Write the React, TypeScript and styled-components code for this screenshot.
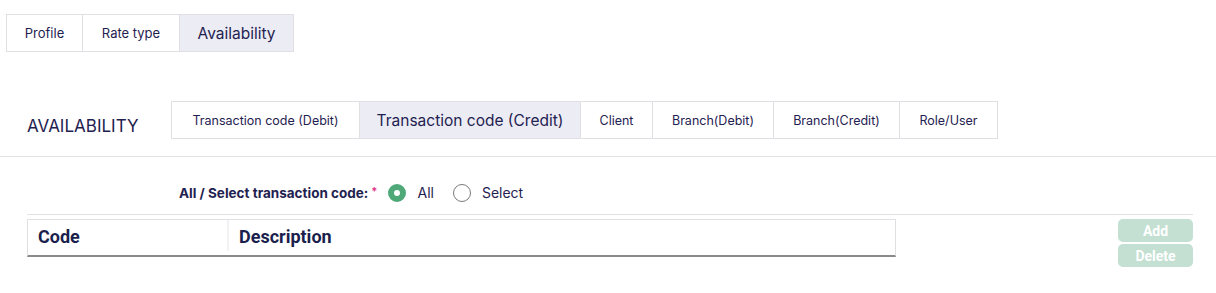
import React, { useState } from 'react'
import styled, { createGlobalStyle } from 'styled-components'

const GlobalStyle = createGlobalStyle`
  body {
    margin: 0;
    background: #fff;
    font-family: Inter, 'Noto Sans', sans-serif;
    color: #1f2250;
  }
`

const mainTabs = [
  { label: 'Profile', width: 77 },
  { label: 'Rate type', width: 98 },
  { label: 'Availability', width: 115 }
]
const subTabs = [
  { label: 'Transaction code (Debit)', width: 189 },
  { label: 'Transaction code (Credit)', width: 222 },
  { label: 'Client', width: 73 },
  { label: 'Branch(Debit)', width: 122 },
  { label: 'Branch(Credit)', width: 127 },
  { label: 'Role/User', width: 99 }
]

const App = () => {
  const [tab, setTab] = useState(2)
  const [sub, setSub] = useState(1)
  const [mode, setMode] = useState<'all' | 'select'>('all')

  return (
    <Page>
      <GlobalStyle />
      <TopTabs>
        {mainTabs.map((t, i) => (
          <TopTab
            key={t.label}
            $active={i === tab}
            $width={t.width}
            onClick={() => setTab(i)}
          >
            {t.label}
          </TopTab>
        ))}
      </TopTabs>

      <SectionHead>
        <SectionTitle>AVAILABILITY</SectionTitle>
        <SubTabs>
          {subTabs.map((t, i) => (
            <SubTab
              key={t.label}
              $active={i === sub}
              $width={t.width}
              onClick={() => setSub(i)}
            >
              {t.label}
            </SubTab>
          ))}
        </SubTabs>
      </SectionHead>

      <RadioRow>
        <FieldLabel>
          All / Select transaction code:<Req>*</Req>
        </FieldLabel>
        <RadioOption onClick={() => setMode('all')}>
          <RadioDot $checked={mode === 'all'} />
          All
        </RadioOption>
        <RadioOption onClick={() => setMode('select')}>
          <RadioDot $checked={mode === 'select'} />
          Select
        </RadioOption>
      </RadioRow>

      <Body>
        <Grid>
          <HeadRow>
            <HeadCell $width={201}>Code</HeadCell>
            <HeadCell>Description</HeadCell>
          </HeadRow>
        </Grid>
        <Actions>
          <ActionButton disabled>Add</ActionButton>
          <ActionButton disabled>Delete</ActionButton>
        </Actions>
      </Body>
    </Page>
  )
}

const Page = styled.div`
  width: 1216px;
  height: 293px;
  overflow: hidden;
`

const TopTabs = styled.div`
  display: flex;
  margin: 14px 0 0 6px;
`

const TopTab = styled.div<{ $active?: boolean; $width: number }>`
  width: ${(p) => p.$width}px;
  height: 38px;
  box-sizing: border-box;
  display: flex;
  align-items: center;
  justify-content: center;
  border: 1px solid #e0e0e4;
  margin-left: -1px;
  font-size: ${(p) => (p.$active ? 15.5 : 13)}px;
  background: ${(p) => (p.$active ? '#ececf5' : '#fff')};
  color: #1f2250;
  cursor: pointer;

  &:first-child {
    margin-left: 0;
  }
`

const SectionHead = styled.div`
  display: flex;
  align-items: flex-end;
  margin-top: 49px;
  padding: 0 0 17px 27px;
  border-bottom: 1px solid #e2e2e6;
`

const SectionTitle = styled.div`
  width: 144px;
  font-size: 17px;
  line-height: 20px;
  padding-bottom: 3px;
  color: #1f2250;
`

const SubTabs = styled.div`
  display: flex;
`

const SubTab = styled.div<{ $active?: boolean; $width: number }>`
  width: ${(p) => p.$width}px;
  height: 38px;
  box-sizing: border-box;
  display: flex;
  align-items: center;
  justify-content: center;
  border: 1px solid #e0e0e4;
  margin-left: -1px;
  font-size: ${(p) => (p.$active ? 15.5 : 12.5)}px;
  background: ${(p) => (p.$active ? '#ececf5' : '#fff')};
  color: #1f2250;
  cursor: pointer;

  &:first-child {
    margin-left: 0;
  }
`

const RadioRow = styled.div`
  display: flex;
  align-items: center;
  height: 58px;
  margin: 0 23px 0 27px;
  padding: 14px 0 0 152px;
  border-bottom: 1px solid #e2e2e6;
  box-sizing: border-box;
`

const FieldLabel = styled.span`
  font-size: 13.5px;
  font-weight: 700;
  margin-right: 11px;
`

const Req = styled.sup`
  color: #e2338a;
  font-size: 11px;
  margin-left: 3px;
  vertical-align: 3px;
`

const RadioOption = styled.label`
  display: flex;
  align-items: center;
  gap: 11px;
  font-size: 14px;
  margin-right: 19px;
  cursor: pointer;
`

const RadioDot = styled.span<{ $checked?: boolean }>`
  width: 18px;
  height: 18px;
  box-sizing: border-box;
  border-radius: 50%;
  border: ${(p) => (p.$checked ? '6px solid #4fa878' : '1.5px solid #7a7a7a')};
  background: #fff;
`

const Body = styled.div`
  display: flex;
  align-items: flex-start;
  justify-content: space-between;
  padding: 4px 23px 0 27px;
`

const Grid = styled.div`
  width: 869px;
  box-sizing: border-box;
  border: 1px solid #e0e0e4;
  border-bottom: 2px solid #8a8a8a;
`

const HeadRow = styled.div`
  display: flex;
  height: 35px;
`

const HeadCell = styled.div<{ $width?: number }>`
  ${(p) => (p.$width ? `width: ${p.$width}px;` : 'flex: 1;')}
  box-sizing: border-box;
  display: flex;
  align-items: center;
  padding: 1px 10px 0;
  font-family: Roboto, 'Liberation Sans', sans-serif;
  font-size: 18px;
  font-weight: 700;
  color: #1b1f4d;
  border-right: 2px solid #f2f2f4;
  margin: 0 0 4px;

  &:last-child {
    border-right: none;
  }
`

const Actions = styled.div`
  display: flex;
  flex-direction: column;
  gap: 2px;
`

const ActionButton = styled.button`
  width: 75px;
  height: 23px;
  border: none;
  border-radius: 5px;
  background: #c3e0d2;
  color: #fff;
  font-family: Roboto, 'Liberation Sans', sans-serif;
  font-size: 14px;
  font-weight: 700;
  padding: 0;
`

export default App
